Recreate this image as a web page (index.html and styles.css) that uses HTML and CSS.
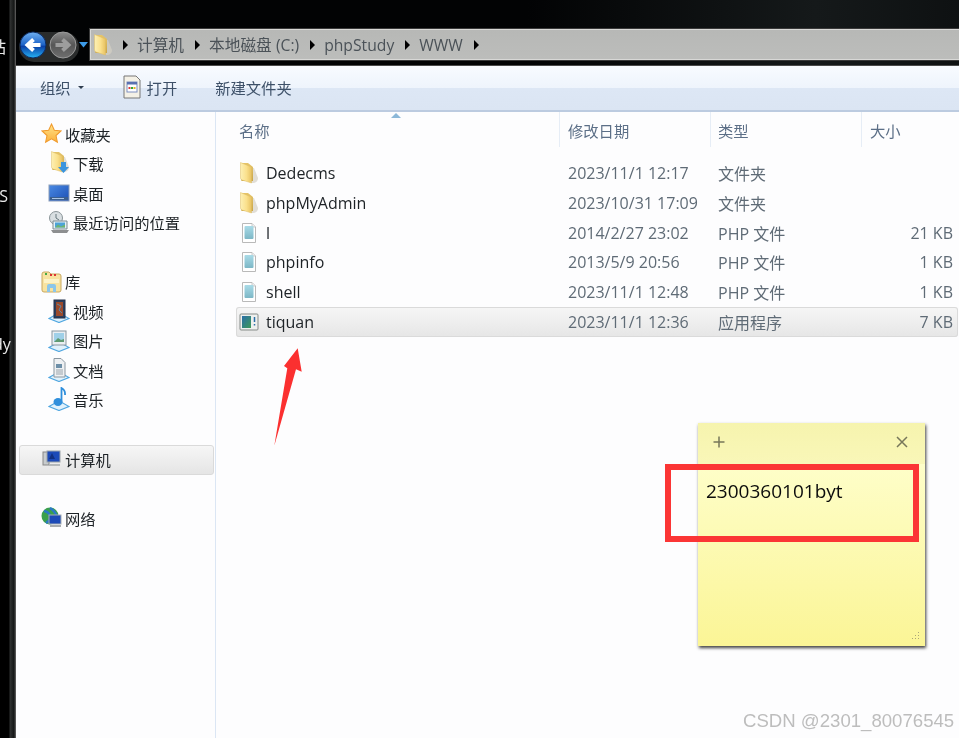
FILE: index.html
```html
<!DOCTYPE html>
<html lang="zh-CN">
<head>
<meta charset="utf-8">
<title>WWW</title>
<link rel="stylesheet" href="styles.css">
</head>
<body>
<svg class="defs" width="0" height="0" aria-hidden="true">
  <defs>
    <linearGradient id="gFolder" x1="0" y1="0" x2="1" y2="0"><stop offset="0" stop-color="#fdf0b4"/><stop offset=".55" stop-color="#fae08c"/><stop offset="1" stop-color="#e8c262"/></linearGradient>
    <linearGradient id="gFolderBack" x1="0" y1="0" x2="0" y2="1"><stop offset="0" stop-color="#e6c56a"/><stop offset="1" stop-color="#c9a548"/></linearGradient>
    <linearGradient id="gPage" x1="0" y1="0" x2="0" y2="1"><stop offset="0" stop-color="#a9dbe8"/><stop offset="1" stop-color="#7db7c6"/></linearGradient>
    <linearGradient id="gBlue" x1="0" y1="0" x2="0" y2="1"><stop offset="0" stop-color="#6fb0f0"/><stop offset=".5" stop-color="#1c62c8"/><stop offset=".55" stop-color="#0a3fa6"/><stop offset="1" stop-color="#27b4f4"/></linearGradient>
    <linearGradient id="gGray" x1="0" y1="0" x2="0" y2="1"><stop offset="0" stop-color="#8b8b8b"/><stop offset=".5" stop-color="#565656"/><stop offset="1" stop-color="#6f6f6f"/></linearGradient>
    <linearGradient id="gStar" x1="0" y1="0" x2="0" y2="1"><stop offset="0" stop-color="#ffe48a"/><stop offset="1" stop-color="#fbb03c"/></linearGradient>
    <linearGradient id="gScreen" x1="0" y1="0" x2="1" y2="1"><stop offset="0" stop-color="#4a8ae4"/><stop offset="1" stop-color="#1b4fb4"/></linearGradient>
    <linearGradient id="gApp" x1="0" y1="0" x2="1" y2="1"><stop offset="0" stop-color="#2a6ea8"/><stop offset="1" stop-color="#3e9a58"/></linearGradient>
    <symbol id="folder" viewBox="0 0 20 22">
      <path d="M12 6h3l4 10q0 4-4 5h-3Z" fill="#d4d0c4" opacity=".7"/>
      <path d="M2 1h7l5 4v14H3Q2 19 2 17Z" fill="url(#gFolderBack)"/>
      <path d="M1.500 .5 12.500 5v16L3 18Q1.500 17.500 1.500 16Z" fill="url(#gFolder)" stroke="#dcbc66" stroke-width=".5"/>
    </symbol>
    <symbol id="php" viewBox="0 0 20 22">
      <path d="M3.500 1.500H13l3.500 3.500v15.500H3.500Z" fill="#fff" stroke="#b9b9b9"/>
      <path d="M13 1.500V5h3.500" fill="#eee" stroke="#b9b9b9" stroke-width=".7"/>
      <rect x="5.500" y="4" width="9" height="13" rx="1" fill="url(#gPage)"/>
    </symbol>
    <symbol id="shelf" viewBox="0 0 22 24">
      <path d="M1 19.500 8 15.500h6l7 4-10 4Z" fill="#dff1fc" stroke="#4fa6e0" stroke-width="1.200"/>
    </symbol>
  </defs>
</svg>

<div class="screen">
  <header class="chrome">
    <div class="nav">
      <svg class="nav-svg" width="72" height="34" viewBox="0 0 72 34">
        <rect x="0" y="3" width="60" height="30" rx="15" fill="#2a2c2c"/>
        <circle cx="14" cy="16" r="13" fill="url(#gBlue)" stroke="#0c2a60"/>
        <path d="M21.500 16H10M14.500 10.500 8.500 16l6 5.500" fill="none" stroke="#fff" stroke-width="4"/>
        <circle cx="44" cy="16" r="13" fill="url(#gGray)" stroke="#9a9a9a"/>
        <path d="M36.500 16H48M43.500 10.500 49.500 16l-6 5.500" fill="none" stroke="#9d9d9d" stroke-width="4"/>
        <path d="M60 13h9l-4.500 5.500Z" fill="#3d9be8"/>
      </svg>
    </div>
    <nav class="address">
      <svg class="addr-folder" width="20" height="22"><use href="#folder"/></svg>
      <span class="crumb">计算机</span>
      <span class="crumb">本地磁盘 (C:)</span>
      <span class="crumb">phpStudy</span>
      <span class="crumb">WWW</span>
      <span class="crumb"></span>
    </nav>
  </header>

  <main class="window">
    <div class="toolbar">
      <span class="tool tool-org">组织<i class="caret"></i></span>
      <span class="tool tool-open">
        <svg width="18" height="24" viewBox="0 0 18 24"><path d="M1 1h12l4 4v18H1Z" fill="#f4f1e6" stroke="#777"/><rect x="4" y="7" width="10" height="10" fill="#fff" stroke="#7c8fc0"/><rect x="4" y="7" width="10" height="2.500" fill="#5a70b0"/><path d="M5.500 12h2v2h-2z" fill="#d33"/><path d="M8 12h2v2H8z" fill="#3a3"/><path d="M10.500 12h2v2h-2z" fill="#e8b020"/></svg>
        打开
      </span>
      <span class="tool">新建文件夹</span>
    </div>

    <div class="panes">
      <aside class="sidebar">
        <section class="group group-fav">
          <div class="side-row side-head">
            <svg width="21" height="21" viewBox="0 0 20 20"><path d="M10 1l2.700 5.900 6.300.7-4.700 4.300 1.300 6.400L10 15.100l-5.600 3.200 1.300-6.400L1 7.600l6.300-.7Z" fill="url(#gStar)" stroke="#f09a2c"/></svg>
            <span>收藏夹</span>
          </div>
          <div class="side-row side-child">
            <svg width="22" height="24" viewBox="0 0 22 24"><use href="#folder" width="20" height="22" x="2" y="0"/><path d="M13 11h5v5h3l-5.500 6L10 16h3Z" fill="#3a94de"/></svg>
            <span>下载</span>
          </div>
          <div class="side-row side-child">
            <svg width="22" height="22" viewBox="0 0 22 22"><rect x="1" y="3" width="20" height="16" fill="url(#gScreen)" stroke="#8b9db8"/><rect x="2" y="15" width="18" height="3" fill="#3b5f8e"/><rect x="4" y="16" width="12" height="1" fill="#a9c4e6"/></svg>
            <span>桌面</span>
          </div>
          <div class="side-row side-child">
            <svg width="22" height="24" viewBox="0 0 22 24"><circle cx="8" cy="8" r="6.500" fill="#d9dfe2" stroke="#8a9498"/><path d="M8 4v4l3 2" stroke="#66767c" fill="none"/><path d="M5 11h14v8H5Z" fill="#e4f0f6" stroke="#7d8b92"/><path d="M7 12.500h10v5H7Z" fill="#4da3d8"/><path d="M7 17.500l3-3 3 2 4-2v3Z" fill="#6fb36f"/><path d="M3 20h18l-2 3H5Z" fill="#8d8f90"/></svg>
            <span>最近访问的位置</span>
          </div>
        </section>

        <section class="group group-lib">
          <div class="side-row side-head">
            <svg width="21" height="23" viewBox="0 0 21 23"><path d="M1 4q0-2 2-2h5l2 2h8q2 0 2 2v14q0 2-2 2H3q-2 0-2-2Z" fill="#f8e3a0" stroke="#c9a860"/><rect x="4" y="3" width="2" height="2" fill="#4a4"/><rect x="9" y="4" width="2" height="2" fill="#d33"/><rect x="13" y="4" width="2" height="2" fill="#d33"/><path d="M3 9h15v4H3Z" fill="#fdf3c8"/><path d="M6 22v-6q0-2 2-2h5q2 0 2 2v6h-3v-4H9v4Z" fill="#8cc6ea"/></svg>
            <span>库</span>
          </div>
          <div class="side-row side-child">
            <svg width="22" height="24" viewBox="0 0 22 24"><use href="#shelf"/><rect x="6" y="1" width="11" height="18" fill="#2c3e5c" stroke="#22304a"/><rect x="8" y="3" width="7" height="14" fill="#9a4a2c"/><path d="M9 5l4 2-2 4 3 3" stroke="#5c88a8" fill="none"/></svg>
            <span>视频</span>
          </div>
          <div class="side-row side-child">
            <svg width="22" height="24" viewBox="0 0 22 24"><use href="#shelf"/><rect x="4" y="3" width="14" height="14" fill="#e9eef2" stroke="#8a97a0"/><rect x="6" y="5" width="10" height="9" fill="#9fd0e8"/><path d="M6 14l4-4 3 2 3-1v3Z" fill="#5e9a72"/></svg>
            <span>图片</span>
          </div>
          <div class="side-row side-child">
            <svg width="22" height="24" viewBox="0 0 22 24"><use href="#shelf"/><path d="M6 .5h7l4 4V19H6Z" fill="#eef0f2" stroke="#8a97a0"/><rect x="8" y="6" width="6" height="4" fill="#6d8fa8"/><path d="M8 12h7M8 14h7M8 16h7" stroke="#9aa5ad"/></svg>
            <span>文档</span>
          </div>
          <div class="side-row side-child">
            <svg width="22" height="24" viewBox="0 0 22 24"><use href="#shelf"/><ellipse cx="10" cy="15" rx="4.500" ry="4" fill="#2f8fdc"/><path d="M13.500 15V1q4 2 3.500 7" fill="none" stroke="#2f8fdc" stroke-width="1.800"/></svg>
            <span>音乐</span>
          </div>
        </section>

        <section class="group group-pc">
          <div class="side-row side-head side-selected">
            <svg width="20" height="20" viewBox="0 0 20 20"><rect x="1" y="3" width="6" height="13" fill="#c8ccce" stroke="#888"/><rect x="5" y="2" width="13" height="11" fill="#1c4ab8" stroke="#9aa2a8"/><path d="M7 10 10 4l3 6Z" fill="#123080"/><path d="M7 15h11v2H7Z" fill="#b4b8ba"/></svg>
            <span>计算机</span>
          </div>
        </section>

        <section class="group group-net">
          <div class="side-row side-head">
            <svg width="21" height="21" viewBox="0 0 21 21"><circle cx="9" cy="9" r="8.500" fill="#3aa04c"/><path d="M3 4q5 1 6 5t-4 7M9 1q5 3 7 9" stroke="#2a78c8" stroke-width="2.500" fill="none"/><rect x="8" y="8" width="12" height="9" fill="#1c4ab8" stroke="#a4acb2"/><path d="M9 18h11v2H9Z" fill="#a8acae"/></svg>
            <span>网络</span>
          </div>
        </section>
      </aside>

      <section class="files">
        <div class="columns">
          <span class="col col-name">名称<i class="sort"></i></span>
          <span class="col col-date">修改日期</span>
          <span class="col col-type">类型</span>
          <span class="col col-size">大小</span>
        </div>
        <div class="rows">
          <div class="row"><span class="cell-name"><svg width="20" height="22"><use href="#folder"/></svg>Dedecms</span><span class="meta">2023/11/1 12:17</span><span class="meta">文件夹</span><span class="meta num"></span></div>
          <div class="row"><span class="cell-name"><svg width="20" height="22"><use href="#folder"/></svg>phpMyAdmin</span><span class="meta">2023/10/31 17:09</span><span class="meta">文件夹</span><span class="meta num"></span></div>
          <div class="row"><span class="cell-name"><svg width="20" height="22"><use href="#php"/></svg>l</span><span class="meta">2014/2/27 23:02</span><span class="meta">PHP 文件</span><span class="meta num">21 KB</span></div>
          <div class="row"><span class="cell-name"><svg width="20" height="22"><use href="#php"/></svg>phpinfo</span><span class="meta">2013/5/9 20:56</span><span class="meta">PHP 文件</span><span class="meta num">1 KB</span></div>
          <div class="row"><span class="cell-name"><svg width="20" height="22"><use href="#php"/></svg>shell</span><span class="meta">2023/11/1 12:48</span><span class="meta">PHP 文件</span><span class="meta num">1 KB</span></div>
          <div class="row row-selected"><span class="cell-name"><svg width="20" height="20" viewBox="0 0 20 20"><rect x="1" y="2" width="18" height="16" rx="1" fill="#eef0ee" stroke="#858b88"/><rect x="3" y="4" width="9" height="12" fill="url(#gApp)"/><path d="M15.500 5v5M15.500 12v1.500" stroke="#2a6ea8" stroke-width="1.500"/></svg>tiquan</span><span class="meta">2023/11/1 12:36</span><span class="meta">应用程序</span><span class="meta num">7 KB</span></div>
        </div>
      </section>
    </div>
  </main>

  <span class="edge edge-a">站</span>
  <span class="edge edge-b">S</span>
  <span class="edge edge-c">dy</span>

  <aside class="note">
    <div class="note-head">
      <svg width="14" height="14" viewBox="0 0 14 14"><path d="M7 1.500v11M1.500 7h11" stroke="#77775a" stroke-width="1.500"/></svg>
      <svg width="14" height="14" viewBox="0 0 14 14"><path d="M2 2l10 10M12 2 2 12" stroke="#77775a" stroke-width="1.500"/></svg>
    </div>
    <div class="note-body">
      <p class="note-text">2300360101byt</p>
      <svg class="grip" width="10" height="10" viewBox="0 0 10 10"><path d="M8 1h1v1H8zM5 4h1v1H5zM8 4h1v1H8zM2 7h1v1H2zM5 7h1v1H5zM8 7h1v1H8z" fill="#aaa67a"/></svg>
    </div>
  </aside>
  <div class="callout"></div>
  <svg class="arrow" width="30" height="100" viewBox="0 0 30 100"><path d="M25.700 .3 29.700 23.700 24 21.300 2.300 97.700 15.300 20.300 12 18Z" fill="#fb3030"/></svg>
  <span class="watermark">CSDN @2301_80076545</span>
</div>
</body>
</html>
```
FILE: styles.css
```css
* { box-sizing: border-box; }
html, body { margin: 0; padding: 0; background: #000; }
body { width: 959px; height: 738px; overflow: hidden; }
.defs { position: absolute; }
svg { display: block; flex: none; }

.screen {
  position: relative;
  width: 959px;
  height: 738px;
  display: flex;
  flex-direction: column;
  overflow: hidden;
  font-family: "Open Sans", "Noto Sans CJK SC", sans-serif;
  font-size: 16px;
  color: #1d2226;
  filter: blur(0.35px);
  background:
    linear-gradient(90deg, #000 0, #000 9px, #303232 10px, #141616 14px, #555 15.500px, transparent 16px),
    linear-gradient(90deg, #020304 0, #020304 55%, #15191a 85%, #0e1112 100%);
}

/* top chrome */
.chrome {
  height: 65px;
  flex: none;
  display: flex;
  align-items: flex-start;
  padding: 29px 0 0 19px;
}
.nav { width: 71px; flex: none; }
.address {
  flex: 1;
  height: 31px;
  display: flex;
  align-items: center;
  padding-left: 2px;
  background: linear-gradient(#b7b8b6, #bcbdbb);
  border-top: 1px solid #d8d8d6;
  border-bottom: 1px solid #d8d8d6;
  border-left: 1px solid #d8d8d6;
  outline: 1px solid #3a3a3a;
  color: #4b5258;
  font-size: 15.700px;
}
.addr-folder { margin-right: -1px; }
.crumb { display: inline-flex; align-items: center; margin-left: 11px; white-space: nowrap; }
.crumb::before {
  content: "";
  width: 0;
  height: 0;
  margin-right: 9px;
  border-left: 5px solid #000;
  border-top: 5px solid transparent;
  border-bottom: 5px solid transparent;
}

/* window */
.window {
  flex: 1;
  min-height: 0;
  margin-left: 16px;
  display: flex;
  flex-direction: column;
  background: #fdfdfe;
  border-top: 1px solid #4a4a4a;
}
.toolbar {
  height: 46px;
  flex: none;
  display: flex;
  align-items: center;
  padding: 0 0 2px 24px;
  gap: 38px;
  font-size: 15.300px;
  border-bottom: 2px solid #bccbe0;
  color: #3d5068;
  background: linear-gradient(#f8fbff 0, #eef4fc 50%, #dde7f5 51%, #dbe5f3 100%);
}
.tool { display: inline-flex; align-items: center; white-space: nowrap; }
.tool-open { gap: 6px; margin-left: 1px; }
.caret {
  width: 0;
  height: 0;
  margin-left: 7px;
  border-top: 3px solid #2f3d4f;
  border-left: 3px solid transparent;
  border-right: 3px solid transparent;
}
.panes { flex: 1; min-height: 0; display: flex; }

/* nav pane */
.sidebar {
  width: 200px;
  flex: none;
  padding: 7px 1px 0 3px;
  font-size: 15.300px;
  border-right: 1px solid #dbe6f4;
}
.group-lib { margin-top: 29.500px; }
.group-pc { margin-top: 30.500px; }
.group-net { margin-top: 28.500px; }
.side-row {
  height: 29.500px;
  display: flex;
  align-items: center;
  gap: 4px;
  white-space: nowrap;
  color: #1d2226;
}
.side-head { padding-left: 22px; gap: 3px; }
.side-child { padding-left: 29px; gap: 3px; }
.side-selected {
  height: 30px;
  padding-bottom: 2px;
  border: 1px solid #dadada;
  border-radius: 3px;
  background: linear-gradient(#f6f6f6, #e5e5e5);
}

/* file list */
.files { flex: 1; min-width: 0; display: flex; flex-direction: column; }
.columns {
  height: 35px;
  flex: none;
  display: grid;
  grid-template-columns: 344px 151px 151px 1fr;
  font-size: 15.300px;
  color: #5c6f87;
}
.col {
  position: relative;
  padding: 7px 0 0 8px;
  border-right: 1px solid #e6edf6;
}
.col-name { padding-left: 23px; }
.col-type { padding-left: 7px; }
.col-size { border-right: 0; }
.sort {
  position: absolute;
  top: 1px;
  left: 175px;
  width: 0;
  height: 0;
  border-bottom: 5px solid #8cb8d8;
  border-left: 5px solid transparent;
  border-right: 5px solid transparent;
}
.rows { padding: 11.500px 1px 0 20px; }
.row {
  height: 29.700px;
  display: grid;
  grid-template-columns: 332px 150px 100px 1fr;
  align-items: center;
  white-space: nowrap;
}
.row-selected {
  border-radius: 3px;
  box-shadow: inset 0 0 0 1px #dadada;
  background: linear-gradient(#f6f6f6, #e6e6e6);
}
.cell-name { display: flex; align-items: center; gap: 7px; padding-left: 3px; color: #1d2226; }
.meta { color: #5f6b76; }
.num { text-align: right; padding-right: 5px; }

/* clipped text at the left edge */
.edge {
  position: absolute;
  width: 16px;
  text-align: right;
  color: #e8e8e8;
  font-size: 16px;
  line-height: 20px;
}
.edge-a { top: 37px; left: -10px; }
.edge-b { top: 186px; left: -8px; }
.edge-c { top: 334px; left: -7px; }

/* sticky note and annotations */
.note {
  position: absolute;
  left: 698px;
  top: 423px;
  width: 227px;
  height: 223px;
  display: flex;
  flex-direction: column;
  box-shadow: 1px 2px 3px rgba(30, 30, 30, .85);
}
.note-head {
  height: 41px;
  flex: none;
  display: flex;
  justify-content: space-between;
  padding: 12px 16px 0 14px;
  background: linear-gradient(#f6f4ae, #f9f7b8);
}
.note-body {
  position: relative;
  flex: 1;
  padding: 13px 8px;
  background: linear-gradient(#fefec9, #fbf596);
}
.note-text { margin: 0; font-size: 19px; line-height: 28px; color: #0c0c0c; }
.grip { position: absolute; right: 5px; bottom: 5px; }
.callout {
  position: absolute;
  left: 665px;
  top: 464px;
  width: 254px;
  height: 78px;
  border: 6px solid #fb3535;
}
.arrow { position: absolute; left: 272px; top: 348px; }
.watermark {
  position: absolute;
  left: 743px;
  top: 711px;
  font-family: "Liberation Sans", sans-serif;
  font-size: 18.600px;
  line-height: 20px;
  color: #bdbdbd;
  white-space: nowrap;
}
```
